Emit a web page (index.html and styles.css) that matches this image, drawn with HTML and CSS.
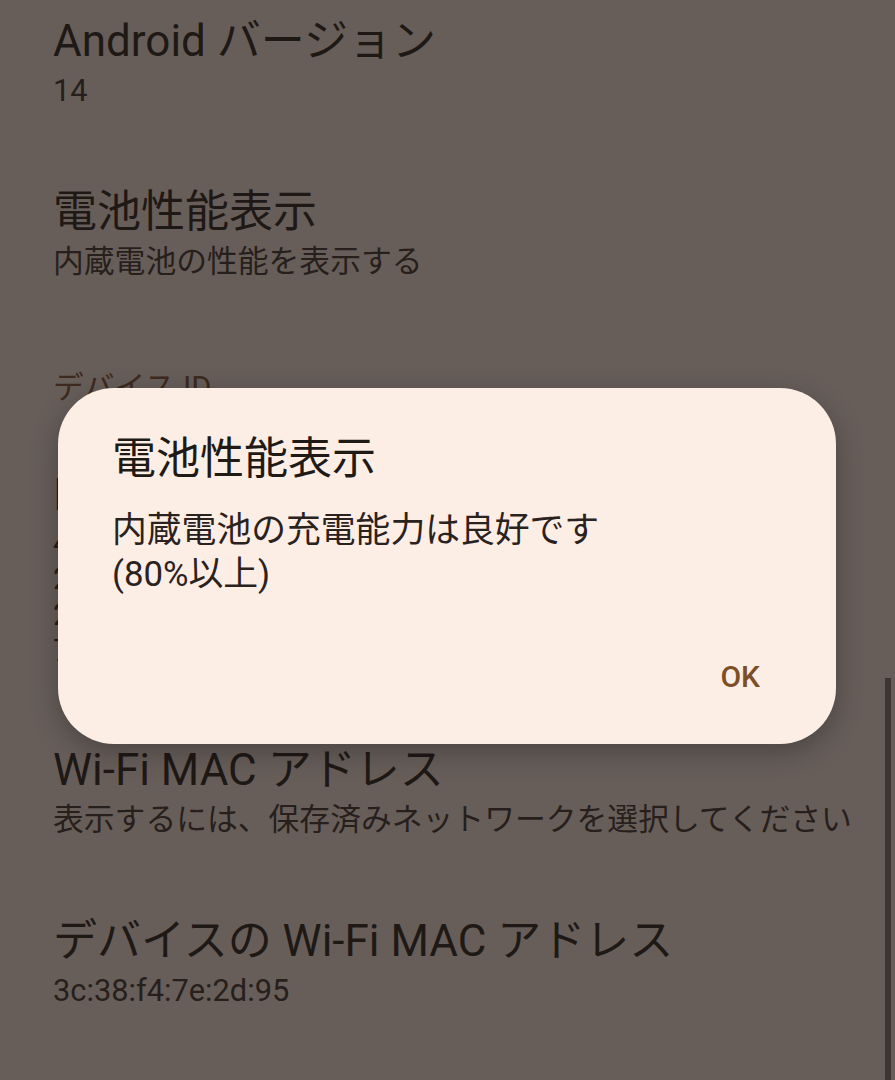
FILE: index.html
```html
<!DOCTYPE html>
<html lang="ja">
<head>
    <meta charset="UTF-8">
    <meta name="viewport" content="width=device-width, initial-scale=1.0">
    <title>デバイス情報</title>
    <link rel="stylesheet" href="styles.css">
</head>
<body>
    <main class="settings">
        <div class="pref">
            <div class="pref-title">Android バージョン</div>
            <div class="pref-summary">14</div>
        </div>
        <div class="pref">
            <div class="pref-title">電池性能表示</div>
            <div class="pref-summary">内蔵電池の性能を表示する</div>
        </div>

        <div class="category">デバイス ID</div>
        <div class="pref pref-tall">
            <div class="pref-title">IMEI</div>
            <div class="pref-summary">
                <div>4</div>
                <div>2</div>
                <div>2</div>
                <div>7</div>
            </div>
        </div>

        <div class="pref">
            <div class="pref-title">Wi-Fi MAC アドレス</div>
            <div class="pref-summary">表示するには、保存済みネットワークを選択してください</div>
        </div>
        <div class="pref">
            <div class="pref-title">デバイスの Wi-Fi MAC アドレス</div>
            <div class="pref-summary">3c:38:f4:7e:2d:95</div>
        </div>
    </main>

    <div class="scroll-thumb"></div>

    <div class="dialog">
        <h2 class="dialog-title">電池性能表示</h2>
        <p class="dialog-body">内蔵電池の充電能力は良好です<br>(80%以上)</p>
        <div class="dialog-actions">
            <button class="dialog-btn">OK</button>
        </div>
    </div>
</body>
</html>
```

FILE: styles.css
```css
* {
    margin: 0;
    padding: 0;
    box-sizing: border-box;
}

body {
    font-family: Roboto, "Noto Sans CJK JP", sans-serif;
    background-color: #675e5a; /* page under the dialog scrim */
    color: #1f1916;
    height: 1080px;
    overflow: hidden;
    position: relative;
}

.settings {
    margin-top: -22px; /* list is scrolled a little */
}

.pref {
    padding: 38px 53px;
}

.pref-title {
    font-size: 44px;
    line-height: 50px;
    white-space: nowrap;
}

.pref-summary {
    margin-top: 5px;
    font-size: 30.8px;
    line-height: 40px;
    color: #271f1c;
    white-space: nowrap;
}

.pref-tall .pref-summary {
    line-height: 36px;
}

.category {
    padding: 48px 53px 24px;
    font-size: 30.8px;
    line-height: 40px;
    color: #3e2a1f;
}

.scroll-thumb {
    position: absolute;
    right: 4px;
    top: 678px;
    width: 6px;
    height: 402px;
    background-color: #3d3532;
}

.dialog {
    position: absolute;
    left: 58px;
    top: 388px;
    width: 778px;
    padding: 46px 76px 47px 54px;
    background-color: #fdeee5;
    border-radius: 56px;
    box-shadow: 0 8px 28px rgba(0, 0, 0, 0.28);
}

.dialog-title {
    font-size: 44px;
    font-weight: 400;
    line-height: 50px;
    color: #201a17;
}

.dialog-body {
    margin-top: 24px;
    font-size: 34.8px;
    line-height: 44px;
    color: #2a221e;
}

.dialog-actions {
    display: flex;
    justify-content: flex-end;
    margin-top: 61px;
}

.dialog-btn {
    background: none;
    border: none;
    font-family: Roboto, sans-serif;
    font-size: 30px;
    font-weight: 500;
    line-height: 40px;
    color: #7d4f27;
    cursor: pointer;
}
```
